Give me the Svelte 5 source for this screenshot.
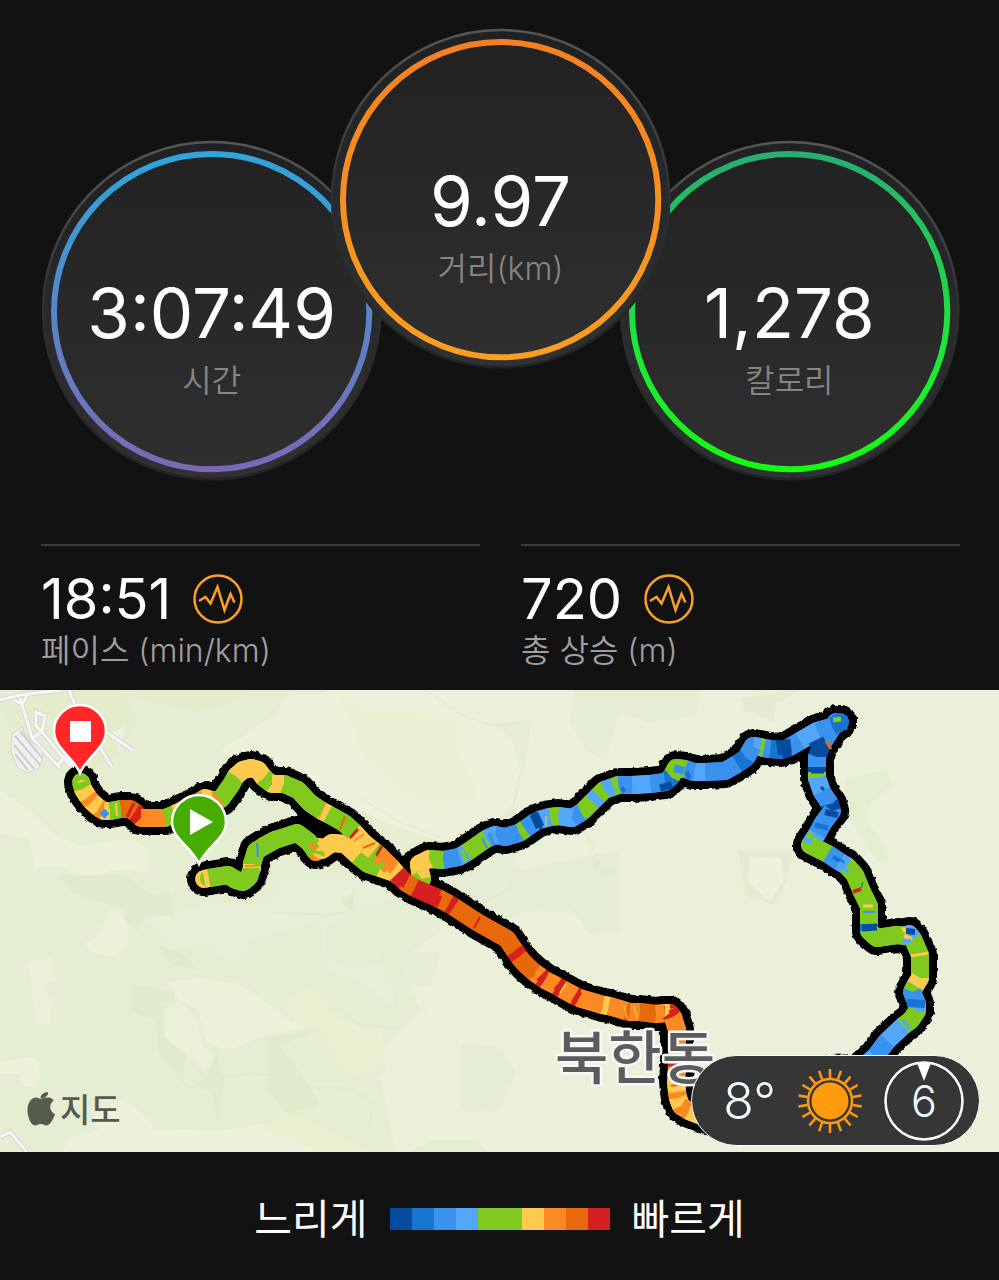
<script>
  const palette = {
    navy: '#054b9f',
    blue: '#1774d0',
    azure: '#3993ee',
    sky: '#53a7fb',
    green: '#80c91f',
    yellow: '#fcca4c',
    orange: '#fb8a24',
    rust: '#e8680c',
    red: '#d6201f'
  };

  const legend = ['navy', 'blue', 'azure', 'sky', 'green', 'green', 'yellow', 'orange', 'rust', 'red'];

  const dials = [
    { name: 'time', value: '3:07:49', label: '시간' },
    { name: 'distance', value: '9.97', label: '거리(km)' },
    { name: 'calories', value: '1,278', label: '칼로리' }
  ];

  const stats = [
    { value: '18:51', label: '페이스 (min/km)' },
    { value: '720', label: '총 상승 (m)' }
  ];

  // each stop is [x, y, pace of the stretch that leaves it]
  const routes = [
    [
      [204, 879, 'yellow'], [209, 878, 'green'], [228, 875, 'green'], [236, 880, 'green'],
      [243, 882, 'green'], [249, 877, 'green'], [252, 868, 'yellow'], [252, 864, 'green'],
      [256, 851, 'green'], [264, 846, 'green'], [275, 840, 'green'],
      [297, 833, 'green'], [309, 842, 'green'], [316, 852, 'orange'], [319, 847, 'yellow'],
      [322, 850, 'yellow'], [332, 843, 'yellow'], [345, 844, 'yellow'], [358, 856, 'green'],
      [368, 864, 'green'], [380, 868, 'yellow'], [395, 873, 'orange'], [400, 877, 'red']
    ],
    [
      [840, 722, 'blue'], [836, 722, 'azure'], [822, 744, 'navy'], [817, 757, 'azure'],
      [817, 767, 'navy'], [817, 772, 'green'], [817, 778, 'sky'], [822, 792, 'azure'],
      [830, 804, 'navy'], [832, 811, 'azure'], [823, 823, 'azure'], [817, 834, 'sky'],
      [810, 845, 'green'], [820, 850, 'green'], [828, 854, 'azure'], [840, 862, 'sky'],
      [847, 866, 'green'], [855, 875, 'green'], [862, 892, 'green'], [869, 906, 'green'],
      [869, 924, 'blue'], [869, 931, 'green'], [877, 938, 'green'], [897, 935, 'green'],
      [906, 936, 'yellow'], [909, 934, 'sky'], [913, 939, 'green'], [920, 955, 'green'],
      [920, 978, 'yellow'], [915, 986, 'green'], [912, 992, 'azure'], [917, 1004, 'sky'],
      [917, 1011, 'green'], [911, 1020, 'green'], [903, 1026, 'sky'], [887, 1041, 'azure'],
      [875, 1057, 'sky'], [858, 1071, 'azure'], [832, 1072, 'azure']
    ],
    [
      [840, 722, 'blue'], [832, 727, 'azure'], [817, 731, 'sky'], [800, 741, 'azure'],
      [788, 748, 'navy'], [781, 750, 'blue'], [770, 749, 'azure'], [764, 748, 'green'],
      [760, 747, 'sky'], [753, 746, 'azure'], [746, 758, 'blue'], [737, 764, 'azure'],
      [725, 771, 'azure'], [705, 772, 'sky'], [694, 772, 'azure'], [685, 769, 'green'],
      [676, 768, 'green'], [671, 777, 'blue'], [665, 782, 'azure'], [650, 784, 'sky'],
      [632, 785, 'azure'], [618, 785, 'green'], [613, 787, 'sky'], [604, 790, 'green'],
      [598, 796, 'sky'], [592, 802, 'green'], [582, 812, 'azure'], [572, 818, 'sky'],
      [558, 816, 'green'], [550, 817, 'sky'], [539, 820, 'navy'], [535, 822, 'azure'],
      [525, 829, 'green'], [519, 833, 'azure'], [505, 837, 'azure'], [495, 835, 'sky'],
      [486, 839, 'green'], [466, 853, 'sky'], [459, 857, 'azure'], [443, 860, 'green'],
      [429, 859, 'yellow'], [419, 864, 'yellow'], [420, 871, 'yellow'], [422, 879, 'green'],
      [417, 883, 'yellow']
    ],
    [
      [81, 782, 'green'], [83, 789, 'yellow'], [88, 797, 'orange'], [92, 802, 'yellow'],
      [99, 808, 'orange'], [104, 811, 'yellow'], [110, 811, 'green'], [121, 809, 'rust'],
      [130, 809, 'rust'], [136, 813, 'red'], [141, 818, 'orange'], [165, 818, 'green'],
      [175, 814, 'yellow'], [194, 805, 'orange'], [205, 798, 'yellow'], [214, 801, 'orange'],
      [221, 799, 'green'], [231, 785, 'green'], [236, 776, 'yellow'], [243, 770, 'yellow'],
      [251, 768, 'yellow'], [258, 770, 'yellow'], [264, 778, 'green'], [272, 784, 'yellow'],
      [284, 784, 'green'],
      [298, 790, 'green'], [310, 803, 'green'], [322, 811, 'yellow'], [328, 814, 'green'],
      [344, 823, 'green'], [354, 832, 'yellow'], [364, 843, 'yellow'], [374, 851, 'green'],
      [379, 855, 'orange'], [391, 867, 'yellow'], [397, 874, 'red'], [405, 882, 'rust'],
      [415, 888, 'red'], [438, 898, 'rust'], [449, 904, 'red'], [454, 907, 'rust'],
      [477, 922, 'rust'], [507, 939, 'rust'], [515, 951, 'red'], [519, 957, 'rust'],
      [526, 965, 'rust'], [535, 973, 'orange'], [541, 977, 'red'], [545, 980, 'orange'],
      [557, 986, 'red'], [562, 989, 'orange'], [575, 996, 'red'], [579, 998, 'orange'],
      [603, 1005, 'yellow'], [609, 1006, 'orange'], [626, 1011, 'rust'], [630, 1012, 'orange'],
      [640, 1012, 'rust'], [656, 1014, 'orange'], [665, 1013, 'yellow'], [670, 1013, 'red'],
      [673, 1017, 'orange'], [677, 1030, 'orange'], [677, 1060, 'red'], [677, 1067, 'orange'],
      [676, 1080, 'yellow'], [677, 1092, 'orange'], [678, 1098, 'yellow'], [681, 1106, 'orange'],
      [689, 1111, 'yellow'], [707, 1118, 'orange'], [725, 1122, 'orange']
    ]
  ];

  // thin bursts of another pace across the line: [x1, y1, x2, y2, pace, width]
  const flecks = [
    [98, 813, 105, 801, 'orange', 2], [102, 816, 107, 811, 'azure', 7],
    [116, 803, 117, 816, 'yellow', 2], [127, 817, 134, 803, 'red', 3],
    [132, 819, 140, 806, 'red', 3], [257, 843, 258, 857, 'azure', 2],
    [245, 866, 258, 866, 'orange', 2], [312, 851, 324, 854, 'green', 3],
    [325, 804, 319, 819, 'orange', 1], [340, 830, 345, 816, 'rust', 2],
    [350, 838, 358, 829, 'red', 3], [354, 841, 364, 834, 'orange', 2],
    [363, 848, 375, 843, 'rust', 2], [376, 856, 382, 846, 'red', 3],
    [365, 866, 375, 854, 'green', 4], [373, 872, 384, 863, 'green', 5],
    [388, 872, 396, 861, 'orange', 6], [400, 886, 407, 872, 'red', 8],
    [420, 894, 440, 902, 'red', 12], [450, 909, 456, 900, 'red', 4],
    [474, 928, 480, 917, 'red', 2], [511, 957, 524, 947, 'red', 5],
    [538, 981, 546, 973, 'red', 4], [555, 990, 562, 982, 'red', 4],
    [573, 1003, 580, 992, 'red', 5], [566, 984, 560, 993, 'yellow', 2],
    [624, 1005, 627, 1018, 'yellow', 1], [634, 1006, 637, 1018, 'yellow', 1],
    [672, 1009, 675, 1015, 'red', 8], [671, 1064, 680, 1064, 'red', 7],
    [671, 1086, 684, 1084, 'rust', 2], [462, 850, 466, 862, 'green', 3],
    [482, 838, 487, 848, 'azure', 2], [489, 833, 494, 845, 'azure', 4],
    [534, 814, 540, 827, 'navy', 9], [546, 816, 546, 826, 'yellow', 1],
    [555, 812, 557, 824, 'green', 2], [580, 808, 586, 818, 'green', 3],
    [588, 800, 593, 808, 'green', 3], [622, 787, 624, 792, 'blue', 4],
    [616, 778, 617, 793, 'green', 3], [660, 788, 672, 785, 'navy', 7],
    [674, 768, 684, 771, 'azure', 8], [686, 776, 690, 774, 'blue', 8],
    [777, 748, 791, 746, 'navy', 14], [816, 740, 822, 752, 'navy', 16],
    [826, 741, 831, 749, 'rust', 3], [833, 720, 841, 719, 'green', 5],
    [845, 716, 845, 730, 'blue', 5], [811, 761, 823, 761, 'azure', 3],
    [811, 771, 824, 771, 'navy', 5], [821, 787, 824, 790, 'navy', 3],
    [825, 812, 838, 815, 'navy', 6], [815, 825, 828, 828, 'blue', 5],
    [807, 835, 813, 836, 'green', 6], [833, 857, 844, 863, 'blue', 4],
    [839, 862, 848, 872, 'sky', 4], [853, 892, 861, 889, 'red', 4],
    [861, 888, 863, 882, 'navy', 1], [863, 906, 873, 906, 'yellow', 3],
    [863, 912, 875, 912, 'azure', 2], [862, 928, 877, 927, 'navy', 7],
    [904, 936, 912, 939, 'yellow', 4], [906, 931, 915, 932, 'navy', 6],
    [903, 944, 911, 940, 'sky', 4], [911, 956, 928, 953, 'yellow', 3],
    [912, 980, 924, 986, 'yellow', 5], [907, 1003, 925, 1004, 'blue', 8],
    [903, 1020, 910, 1029, 'sky', 3], [905, 1014, 911, 1022, 'green', 4]
  ];

  const outline = (route) => route.map(([x, y]) => `${x},${y}`).join(' ');

  const stretches = routes.flatMap((route) =>
    route.slice(1).map(([x, y], i) => ({
      x1: route[i][0],
      y1: route[i][1],
      x2: x,
      y2: y,
      pace: route[i][2]
    }))
  );

  const rays = Array.from({ length: 18 }, (_, i) => i * 20);
</script>

<main class="activity">
  <section class="dials">
    {#each dials as dial}
      <div class="dial {dial.name}">
        <svg viewBox="0 0 340 340" aria-hidden="true">
          <defs>
            <linearGradient id="ring-time" x1="0" y1="0" x2="0" y2="1">
              <stop offset="0" stop-color="#2fa5dc" />
              <stop offset="1" stop-color="#7b68b4" />
            </linearGradient>
            <linearGradient id="ring-distance" x1="0" y1="0" x2="0" y2="1">
              <stop offset="0" stop-color="#f58023" />
              <stop offset="1" stop-color="#f89f20" />
            </linearGradient>
            <linearGradient id="ring-calories" x1="0" y1="0" x2="0" y2="1">
              <stop offset="0" stop-color="#27ae70" />
              <stop offset="0.6" stop-color="#1ee63c" />
              <stop offset="1" stop-color="#16fa12" />
            </linearGradient>
            <linearGradient id="rim" x1="0" y1="0" x2="0" y2="1">
              <stop offset="0" stop-color="#555657" />
              <stop offset="0.5" stop-color="#2d2e2f" />
              <stop offset="1" stop-color="#222324" />
            </linearGradient>
            <linearGradient id="case" x1="0" y1="0" x2="0" y2="1">
              <stop offset="0" stop-color="#202122" />
              <stop offset="1" stop-color="#303132" />
            </linearGradient>
            <linearGradient id="face" x1="0" y1="0" x2="0" y2="1">
              <stop offset="0" stop-color="#222222" />
              <stop offset="1" stop-color="#2f2f2f" />
            </linearGradient>
          </defs>
          <circle cx="170" cy="170" r="169" fill="url(#case)" stroke="url(#rim)" stroke-width="2.5" />
          <circle cx="170" cy="171" r="158" fill="url(#face)" stroke="url(#ring-{dial.name})" stroke-width="6" />
        </svg>
        <div class="reading">
          <strong>{dial.value}</strong>
          <span>{dial.label}</span>
        </div>
      </div>
    {/each}
  </section>

  <section class="stats">
    {#each stats as stat}
      <div class="stat">
        <div class="stat-value">
          <strong>{stat.value}</strong>
          <svg viewBox="0 0 50 50" aria-hidden="true">
            <circle cx="25" cy="25" r="23.5" />
            <path d="M6 27 L12.500 23 L17.500 29.500 L24.500 13 L31.500 36 L37.500 20 L41.500 28.500" />
          </svg>
        </div>
        <span>{stat.label}</span>
      </div>
    {/each}
  </section>

  <section class="map">
    <svg class="terrain" viewBox="0 690 999 462" role="img" aria-label="북한동 지도">
      <defs>
        <filter id="rough" x="-5%" y="-5%" width="110%" height="110%">
          <feTurbulence type="fractalNoise" baseFrequency="0.25" numOctaves="1" seed="4" />
          <feDisplacementMap in="SourceGraphic" scale="4" xChannelSelector="R" yChannelSelector="G" />
        </filter>
      </defs>

      <rect y="690" width="999" height="462" fill="#eaf0da" />
      <path fill="#e5edd2" d="M0 690H390L410 712L470 724L530 722L518 790L505 850L450 870L440 930L400 960L420 1010L380 1050L410 1152H0Z" />
      <path fill="#eef0dc" d="M330 690H440L458 714L494 724L512 740L520 770L512 805L470 850L400 828L340 802L300 788L250 764L220 752L270 718Z" />
      <path fill="#e9efd1" d="M335 692L360 708L455 718L458 752L480 798L440 806L395 790L365 758L352 726Z" opacity="0.7" />
      <path fill="#eef0dc" d="M0 790L30 810L60 838L80 846L130 838L150 850L148 872L110 870L92 880L60 866L35 868L30 840L0 832Z" />
      <path fill="#e3edcc" d="M128 690H250L228 704L198 712L140 700ZM0 705L20 690H125L135 720L118 756L90 770L60 738L20 740Z" />
      <path fill="#eaf0da" d="M290 694L330 694L290 730L250 756L225 746L260 734Z" />
      <path fill="#eaf0da" d="M210 905H270L280 880H390V900L350 906L325 930V960L350 970L390 960L395 1010L360 980L325 970L320 920L248 940L240 962L215 955L208 940L180 950L145 920Z" opacity="0.65" />
      <path fill="#eef0dc" d="M108 912Q120 906 126 924Q132 952 110 956Q90 952 82 944Q100 940 108 912ZM170 982L198 978L240 984L270 1005L300 1029L268 1034L228 1050L207 1042L198 1010L178 1000ZM0 1062L34 1057Q44 1066 36 1088L22 1085L20 1074L0 1074Z" />
      <path fill="#eef0dc" d="M120 1100L140 1110L155 1129L220 1131L260 1124L300 1138L370 1152H62L70 1138L98 1130L92 1110Z" />
      <path fill="#eaf0da" d="M28 962L52 958L56 982L44 985L52 1000L51 1025L36 1024ZM165 1010L185 1005L198 1024L203 1046L215 1058L204 1072L182 1050L165 1038ZM380 1075L410 1062L430 1152H395Z" />
      <path fill="#e9f0d0" d="M285 1004Q310 976 325 1002Q338 1026 382 1032L385 1060Q365 1082 342 1070L320 1030L302 1032ZM265 1130L285 1112L330 1130L365 1152H325Z" />
      <path fill="#dfebcc" d="M124 900L170 892L175 917L145 914L138 932L124 917ZM158 945L187 956L198 970L172 965ZM130 984L175 992L174 1000L160 1004L158 1020L130 1012ZM58 875L125 875L160 900L120 908L70 892ZM155 1010L165 1006L162 1035L186 1056L182 1080L190 1090L210 1072L216 1050L224 1080L218 1124L212 1090L184 1086L158 1050ZM268 1038L320 1028L280 1046L300 1072L320 1104L288 1114L268 1090ZM340 902L355 890L352 912Z" />
      <path fill="#e4ecd2" d="M445 860L500 830L520 870L620 850V930L590 935L570 910L520 912L500 925L448 900ZM575 690H700L696 716L646 722L620 712L605 760L585 750L570 722ZM380 950L440 953L430 985L385 986ZM462 1043L500 1048L516 1072L498 1112L460 1110Z" opacity="0.8" />
      <path fill="#deebca" d="M595 870L613 868L616 874L600 878L600 862L590 848L585 832L594 842ZM845 780L885 770L892 784L870 804L866 820L888 850L886 862L878 862L856 830L847 800ZM410 1152L430 1140H475L488 1152Z" opacity="0.6" />
      <path fill="#e3ecd0" d="M738 850H793L787 878L778 905L745 896ZM740 698L800 690L776 704L774 722L745 710Z" />
      <path fill="#edf1de" d="M750 856L780 858L784 880L770 902L748 882Z" />
      <path fill="#eef0dc" d="M508 925L550 912Q582 905 594 950Q598 958 574 954L553 932ZM436 982Q460 978 456 1018Q434 1032 426 1008Q424 986 436 982ZM110 735L125 725L120 752Z" />
      <path fill="none" stroke="#dce8ca" stroke-width="2" opacity="0.4" d="M425 690L460 714L490 725L530 722L525 762L518 780L512 815M360 798L400 822L442 838M510 880Q515 890 480 904M272 912L330 915L345 912M335 1005L360 1025L400 1028M222 1078Q270 1065 300 1090Q350 1080 372 1103L370 1126" />

      <g class="roads">
        <path class="casing" d="M0 700L20 695L62 690M20 698L32 738L60 768M14 700L22 704L28 694M69 690L78 712L132 750M36 712L45 716L42 732L36 726ZM32 738L42 732L70 766M98 744L112 767M58 764L66 756L75 770M0 1137L10 1132L27 1152" />
        <path class="road" d="M0 700L20 695L62 690M20 698L32 738L60 768M14 700L22 704L28 694M69 690L78 712L132 750M36 712L45 716L42 732L36 726ZM32 738L42 732L70 766M98 744L112 767M58 764L66 756L75 770M0 1137L10 1132L27 1152" />
        <path class="lot" d="M12 734L22 727L26 738L42 750L43 757L39 768L28 773L18 768L11 752Z" />
        <path class="lanes" d="M15 736L40 765M20 731L42 758M14 745L34 769M15 754L28 770" />
      </g>

      <g filter="url(#rough)">
        {#each routes as route}
          <polyline class="route-edge" points={outline(route)} />
        {/each}
      </g>
      {#each stretches as s}
        <line class="pace joint" x1={s.x1} y1={s.y1} x2={s.x2} y2={s.y2} stroke={palette[s.pace]} />
      {/each}
      {#each stretches as s}
        <line class="pace" x1={s.x1} y1={s.y1} x2={s.x2} y2={s.y2} stroke={palette[s.pace]} />
      {/each}
      {#each flecks as [x1, y1, x2, y2, pace, width]}
        <line {x1} {y1} {x2} {y2} stroke={palette[pace]} stroke-width={width} />
      {/each}

      <text class="place" x="555" y="1079">북한동</text>

      <path class="pin" fill="#ff2727" d="M80 773C74 758 54 748 54 731A26 26 0 0 1 106 731C106 748 86 758 80 773Z" />
      <rect x="70" y="721" width="21" height="21" fill="#fff" />
      <path class="pin" fill="#46ad00" d="M199 864C192 847 172 839 172 822A27 27 0 0 1 226 822C226 839 206 847 199 864Z" />
      <path fill="#fff" d="M190 809V835L213 822Z" />

      <path
        class="apple"
        d="M40.500 1099C43 1099 45 1097.500 48 1097.500C51 1097.500 52.700 1099 53.800 1100.600C48.500 1104 49.500 1112 55 1114.300C53.500 1119 50 1125.500 46.500 1125.500C44.300 1125.500 43.500 1124 40.800 1124C38 1124 37.200 1125.500 35 1125.500C31 1125.500 27.500 1117 27.500 1110C27.500 1102 32 1097.500 36 1097.500C38 1097.500 39.500 1099 40.500 1099ZM40.500 1098.500C40 1096 43 1092 48 1092C48.500 1095.500 45 1099 40.500 1098.500Z"
      />
      <text class="credit" x="60" y="1122">지도</text>
    </svg>

    <div class="weather">
      <span class="temperature">8°</span>
      <svg class="sun" viewBox="-32 -32 64 64" aria-hidden="true">
        <circle r="18.500" fill="#ff9b0d" />
        <circle r="22" fill="none" stroke="#ff9b0d" stroke-width="2.500" />
        {#each rays as angle}
          <line y1="-23" y2="-32" transform="rotate({angle})" stroke="#ff9b0d" stroke-width="2.500" />
        {/each}
      </svg>
      <div class="wind">
        <svg viewBox="0 0 80 80" aria-hidden="true">
          <circle cx="40" cy="40" r="38.500" fill="none" stroke="#fff" stroke-width="2.500" />
          <path fill="#fff" d="M33 2H47L40 20Z" />
        </svg>
        <span>6</span>
      </div>
    </div>
  </section>

  <footer class="legend">
    <span>느리게</span>
    <div class="scale">
      {#each legend as pace}
        <i style:background={palette[pace]}></i>
      {/each}
    </div>
    <span>빠르게</span>
  </footer>
</main>

<style>
  :global(body) {
    background: #121212;
  }

  .activity {
    color: #fff;
    background: #121212;
    font-family: Inter, "Noto Sans CJK KR", sans-serif;
  }

  strong {
    font-weight: 400;
  }

  svg {
    display: block;
  }

  .dials {
    display: flex;
    align-items: flex-end;
    padding: 29px 40px 0 42px;
  }

  .dial {
    display: grid;
    flex: 0 0 37%;
  }

  .dial > * {
    grid-area: 1 / 1;
  }

  .dial.distance {
    z-index: 1;
    margin: 0 -5.5% 112px;
  }

  .dial > svg {
    width: 100%;
    overflow: visible;
  }

  .reading {
    display: flex;
    flex-direction: column;
    align-items: center;
    gap: 12px;
    padding-top: 40%;
  }

  .reading strong {
    font-size: 69px;
    line-height: 72px;
  }

  .reading span {
    color: #858585;
    font-size: 32px;
    font-weight: 350;
    line-height: 40px;
  }

  .stats {
    display: grid;
    grid-template-columns: 1fr 1fr;
    gap: 41px;
    padding: 64px 39px 16px 41px;
  }

  .stat {
    padding-top: 25px;
    border-top: 2px solid #3a3a3a;
  }

  .stat-value {
    display: flex;
    align-items: center;
    gap: 22px;
  }

  .stat-value strong {
    font-size: 56px;
    line-height: 56px;
  }

  .stat-value svg {
    width: 50px;
    height: 50px;
    fill: none;
    stroke: #fc9f26;
    stroke-width: 2.5;
  }

  .stat > span {
    display: block;
    color: #a0a0a0;
    font-size: 32px;
    font-weight: 350;
    line-height: 47px;
  }

  .map {
    position: relative;
  }

  .terrain {
    width: 100%;
  }

  .casing,
  .road {
    fill: none;
    stroke: #d3d7d6;
    stroke-width: 5;
  }

  .road {
    stroke: #f6f7f5;
    stroke-width: 3;
  }

  .lot {
    fill: #eff1ec;
    stroke: #d3d7d6;
  }

  .lanes {
    fill: none;
    stroke: #cbd0d0;
    stroke-width: 2;
  }

  .route-edge {
    fill: none;
    stroke: #000;
    stroke-width: 34;
    stroke-linecap: round;
    stroke-linejoin: round;
  }

  .pace {
    stroke-width: 18;
  }

  .joint {
    stroke-linecap: round;
  }

  .place {
    fill: #5b5c5e;
    stroke: #f8f8f5;
    stroke-width: 5;
    stroke-linejoin: round;
    paint-order: stroke;
    font-size: 58px;
    font-weight: 500;
  }

  .pin {
    stroke: #fff;
    stroke-width: 2.5;
  }

  .apple,
  .credit {
    fill: #565c4b;
  }

  .credit {
    font-size: 33px;
    font-weight: 500;
  }

  .weather {
    position: absolute;
    right: 19px;
    bottom: 6px;
    display: flex;
    align-items: center;
    gap: 22px;
    box-sizing: border-box;
    height: 91px;
    padding: 0 15px 0 31px;
    border: 1px solid #fff;
    border-radius: 46px;
    background: #363636;
    color: #f0faff;
    font-size: 50px;
    font-weight: 350;
    line-height: 50px;
  }

  .sun {
    width: 64px;
    height: 64px;
  }

  .wind {
    display: grid;
    place-items: center;
    width: 80px;
    font-size: 43px;
  }

  .wind > * {
    grid-area: 1 / 1;
  }

  .legend {
    display: flex;
    align-items: center;
    justify-content: center;
    gap: 22px;
    box-sizing: border-box;
    height: 128px;
    padding-top: 6px;
    font-size: 41px;
    line-height: 48px;
  }

  .scale {
    display: flex;
    height: 22px;
  }

  .scale i {
    width: 22px;
  }
</style>
